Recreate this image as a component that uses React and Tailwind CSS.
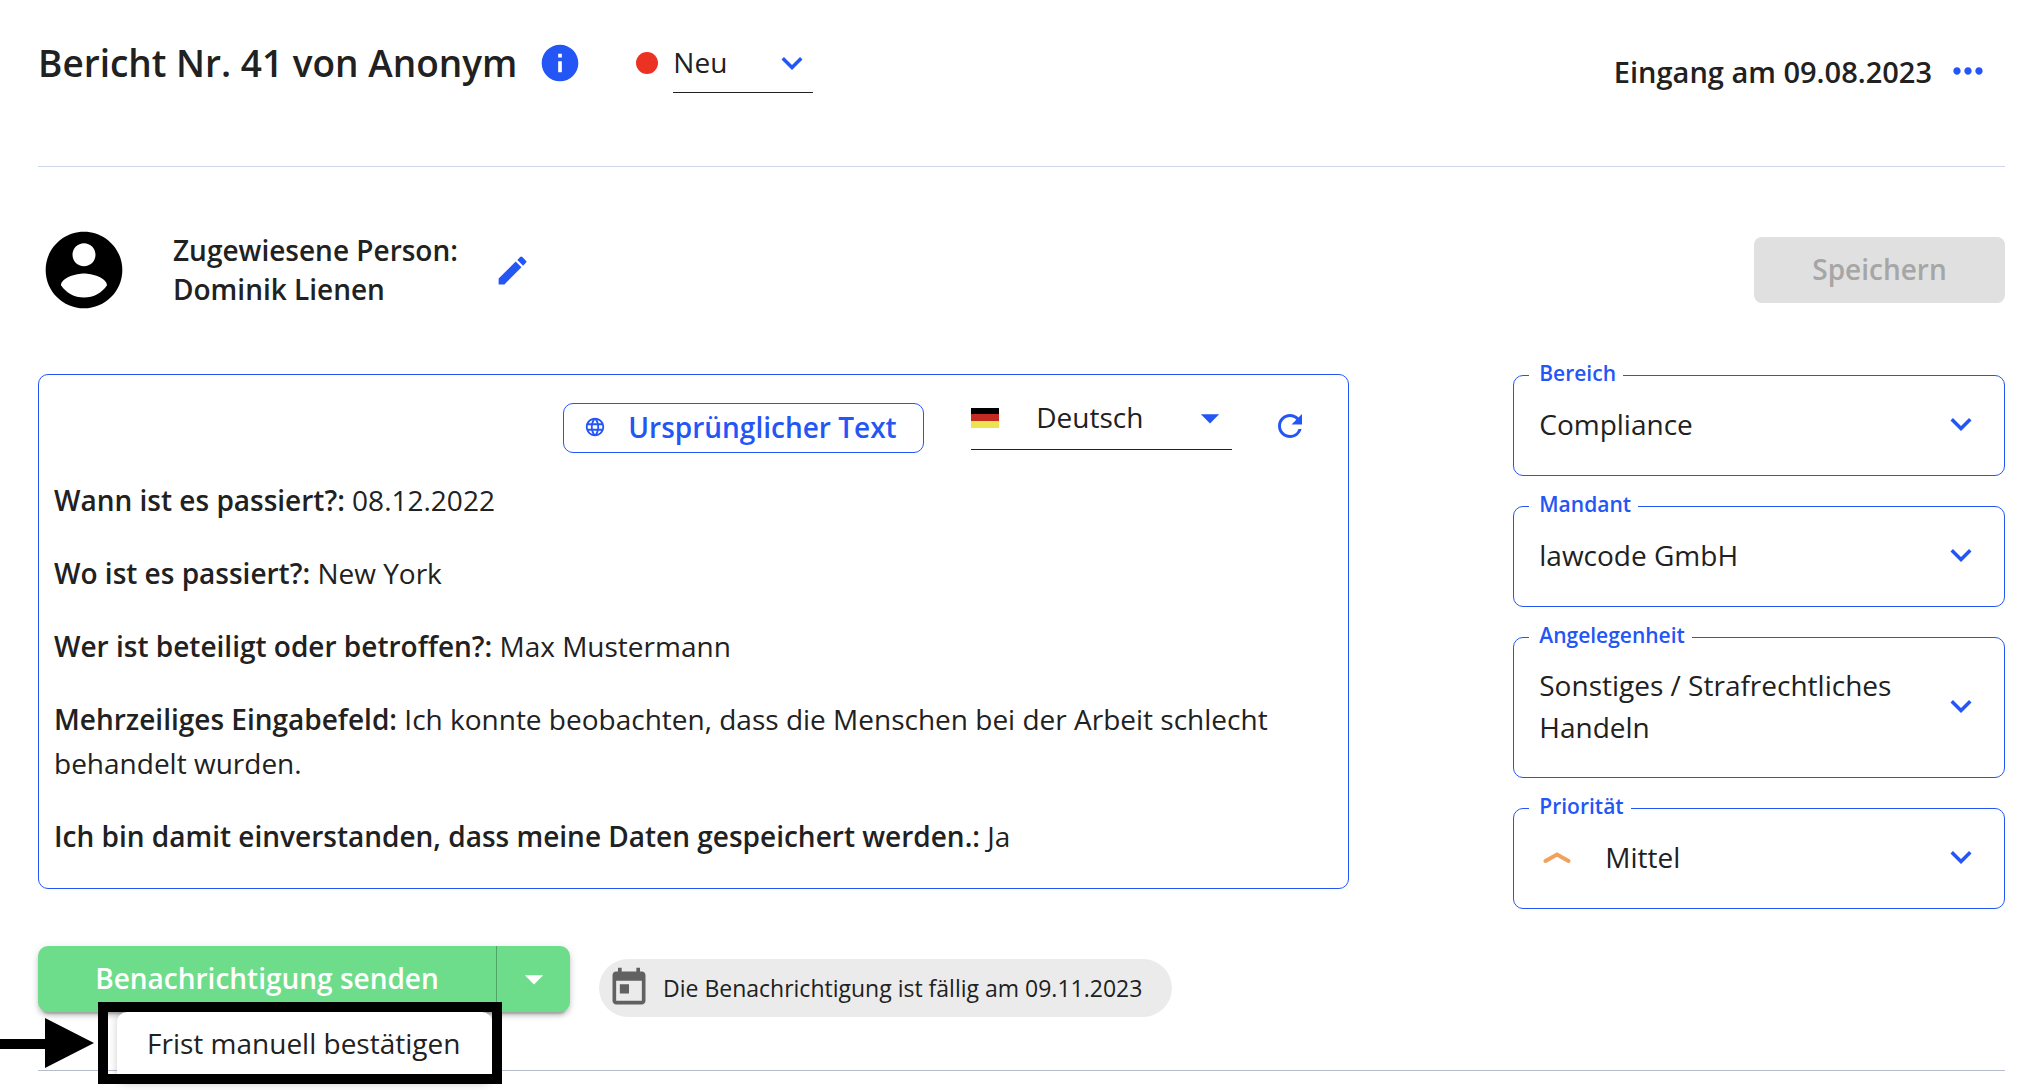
import {
  MdArrowDropDown,
  MdEdit,
  MdInfo,
  MdLanguage,
  MdMoreHoriz,
  MdRefresh,
} from "react-icons/md";

const answers = [
  ["Wann ist es passiert?:", "08.12.2022"],
  ["Wo ist es passiert?:", "New York"],
  ["Wer ist beteiligt oder betroffen?:", "Max Mustermann"],
  [
    "Mehrzeiliges Eingabefeld:",
    "Ich konnte beobachten, dass die Menschen bei der Arbeit schlecht behandelt wurden.",
  ],
  ["Ich bin damit einverstanden, dass meine Daten gespeichert werden.:", "Ja"],
];

function Chevron({ className }) {
  return (
    <svg viewBox="0 0 24 24" fill="currentColor" aria-hidden="true" className={className}>
      <path d="M7.41 8.59 12 13.17l4.59-4.58L18 10l-6 6-6-6 1.41-1.41z" />
    </svg>
  );
}

function Avatar() {
  return (
    <svg viewBox="0 0 24 24" aria-hidden="true" className="size-[92px] shrink-0 fill-black">
      <path d="M12 2C6.48 2 2 6.48 2 12s4.48 10 10 10 10-4.48 10-10S17.52 2 12 2zm0 3c1.66 0 3 1.34 3 3s-1.34 3-3 3-3-1.34-3-3 1.34-3 3-3zm0 14.2c-2.5 0-4.71-1.28-6-3.22.03-1.99 4-3.08 6-3.08 1.99 0 5.97 1.09 6 3.08-1.29 1.94-3.5 3.22-6 3.22z" />
    </svg>
  );
}

function CalendarIcon() {
  return (
    <svg viewBox="0 0 24 24" aria-hidden="true" className="size-11 shrink-0 fill-[#616161]">
      <path d="M19 3h-1V1h-2v2H8V1H6v2H5c-1.11 0-1.99.9-1.99 2L3 19c0 1.1.89 2 2 2h14c1.1 0 2-.9 2-2V5c0-1.1-.9-2-2-2zm0 16H5V8h14v11zM7 10h5v5H7z" />
    </svg>
  );
}

function Flag() {
  return (
    <span className="pointer-events-none absolute left-0 flex h-5 w-7 flex-col">
      <span className="flex-1 bg-black" />
      <span className="flex-1 bg-[#c52b20]" />
      <span className="flex-1 bg-[#ebe34f]" />
    </span>
  );
}

function PriorityIcon() {
  return (
    <svg
      viewBox="0 0 28 16"
      fill="none"
      stroke="#f2a05c"
      strokeWidth="4"
      strokeLinecap="round"
      aria-hidden="true"
      className="pointer-events-none absolute left-[29px] h-4 w-7"
    >
      <path d="M2.500 12 14 5.500 25.500 12" />
    </svg>
  );
}

function FieldBox({ id, label, children }) {
  return (
    <fieldset className="min-w-0 rounded-[10px] border border-[#2456f6] pt-[11px] pb-[29px]">
      <legend className="ml-[15px] pr-[7px] pb-1 pl-[10px] text-[21px] leading-7 font-semibold text-[#2456f6]">
        <label htmlFor={id}>{label}</label>
      </legend>
      <div className="relative flex items-center">
        {children}
        <Chevron className="pointer-events-none absolute right-[22px] size-[42px] text-[#2456f6]" />
      </div>
    </fieldset>
  );
}

function SelectField({ id, label, value, icon }) {
  return (
    <FieldBox id={id} label={label}>
      {icon}
      <select
        id={id}
        className={
          icon
            ? "h-11 w-full appearance-none bg-transparent pr-16 pl-[91px]"
            : "h-11 w-full appearance-none bg-transparent pr-16 pl-[25px]"
        }
      >
        <option>{value}</option>
      </select>
    </FieldBox>
  );
}

export default function App() {
  return (
    <div className="min-h-screen overflow-hidden bg-white pr-[31px] pl-[38px] font-['Open_Sans',sans-serif] text-[28px] leading-[39px] text-[#212121]">
      <header className="flex items-start justify-between border-b border-[#cdd5e8] pt-[33px] pb-[73px]">
        <div className="flex h-[60px] items-center">
          <h1 className="text-[37px] leading-[50px] font-semibold">Bericht Nr. 41 von Anonym</h1>
          <button type="button" aria-label="Information" className="ml-[21px] text-[#2456f6]">
            <MdInfo className="size-11" />
          </button>
          <span className="mr-[15px] ml-[54px] size-[22px] rounded-full bg-[#ec3323]" />
          <div className="relative flex h-full w-[140px] items-center border-b border-[#212121]">
            <select aria-label="Status" className="h-full w-full appearance-none bg-transparent">
              <option>Neu</option>
            </select>
            <Chevron className="pointer-events-none absolute right-0 size-[42px] text-[#2456f6]" />
          </div>
        </div>
        <div className="mt-4 flex h-11 items-center gap-[14px] pr-[15px] text-[29px] font-semibold">
          <span>Eingang am 09.08.2023</span>
          <button type="button" aria-label="Weitere Aktionen" className="text-[#2456f6]">
            <MdMoreHoriz className="size-11" />
          </button>
        </div>
      </header>

      <section className="mt-[57px] flex items-center justify-between">
        <div className="flex items-center">
          <Avatar />
          <p className="ml-[43px] font-semibold">
            Zugewiesene Person:
            <br />
            Dominik Lienen
          </p>
          <button type="button" aria-label="Person bearbeiten" className="ml-9 text-[#2456f6]">
            <MdEdit className="size-[37px]" />
          </button>
        </div>
        <button
          type="button"
          disabled
          className="h-[66px] w-[251px] rounded-lg bg-[#e0e0e0] pb-0.5 font-semibold text-[#a6a6a6]"
        >
          Speichern
        </button>
      </section>

      <main className="mt-[58px] grid grid-cols-[8fr_3fr] items-start gap-x-[164px]">
        <section className="rounded-[10px] border border-[#2456f6] pt-[11px] pr-10 pb-[30px] pl-[15px]">
          <div className="flex items-end justify-end">
            <button
              type="button"
              className="flex h-[50px] w-[361px] items-center rounded-[10px] border border-[#2456f6] pb-0.5 pl-5 font-semibold text-[#2456f6]"
            >
              <MdLanguage className="mr-[22px] size-[22px]" />
              Ursprünglicher Text
            </button>
            <div className="relative mb-[3px] ml-[47px] flex h-16 w-[261px] items-center border-b border-[#212121]">
              <Flag />
              <select
                aria-label="Sprache"
                className="h-full w-full appearance-none bg-transparent pl-[65px]"
              >
                <option>Deutsch</option>
              </select>
              <MdArrowDropDown className="pointer-events-none absolute right-0 size-11 text-[#2456f6]" />
            </div>
            <button type="button" aria-label="Neu laden" className="mb-[9px] ml-10 text-[#2456f6]">
              <MdRefresh className="size-9" />
            </button>
          </div>
          <div className="mt-[25px] flex flex-col gap-[29px] leading-[44px]">
            {answers.map(([question, answer]) => (
              <p key={question}>
                <strong className="font-semibold">{question}</strong> {answer}
              </p>
            ))}
          </div>
        </section>

        <aside className="-mt-[15px] flex flex-col gap-[14px]">
          <SelectField id="bereich" label="Bereich" value="Compliance" />
          <SelectField id="mandant" label="Mandant" value="lawcode GmbH" />
          <FieldBox id="angelegenheit" label="Angelegenheit">
            <span aria-hidden="true" className="pr-[90px] pl-[25px] leading-[42px]">
              Sonstiges / Strafrechtliches Handeln
            </span>
            <select id="angelegenheit" className="absolute inset-0 h-full w-full opacity-0">
              <option>Sonstiges / Strafrechtliches Handeln</option>
            </select>
          </FieldBox>
          <SelectField id="prioritaet" label="Priorität" value="Mittel" icon={<PriorityIcon />} />
        </aside>
      </main>

      <footer className="mt-[37px] flex items-start border-b border-[#b6bcc8] pb-[53px]">
        <div className="relative flex h-[66px] w-[532px]">
          <div className="flex w-full rounded-[10px] bg-[#6ddd8b] text-white shadow-[0_6px_2px_-4px_rgba(0,0,0,0.2),0_4px_4px_rgba(0,0,0,0.14),0_2px_10px_rgba(0,0,0,0.12)]">
            <button type="button" className="flex-1 border-r border-[#50a568] pb-0.5 font-semibold">
              Benachrichtigung senden
            </button>
            <button
              type="button"
              aria-label="Weitere Optionen"
              className="flex w-[73px] items-center justify-center"
            >
              <MdArrowDropDown className="size-11" />
            </button>
          </div>

          <div
            role="menu"
            className="absolute top-full left-[79px] h-[72px] w-[375px] rounded-[10px] bg-white shadow-[0_0_8px_rgba(0,0,0,0.2)]"
          >
            <button type="button" role="menuitem" className="h-[62px] w-full pl-[30px] text-left">
              Frist manuell bestätigen
            </button>
          </div>

          <div className="pointer-events-none absolute top-[56px] left-[60px] h-[82px] w-[404px] border-[10px] border-black" />
          <svg
            viewBox="0 0 94 50"
            aria-hidden="true"
            className="pointer-events-none absolute top-[72px] -left-[38px] h-[50px] w-[94px] fill-black"
          >
            <path d="M0 21h45V0l49 25-49 25V31H0z" />
          </svg>
        </div>

        <div className="mt-[13px] ml-[29px] flex h-[58px] items-center rounded-full bg-[#ebebeb] pr-[30px] pl-2 text-[23px]">
          <CalendarIcon />
          <span className="ml-3">Die Benachrichtigung ist fällig am 09.11.2023</span>
        </div>
      </footer>
    </div>
  );
}
